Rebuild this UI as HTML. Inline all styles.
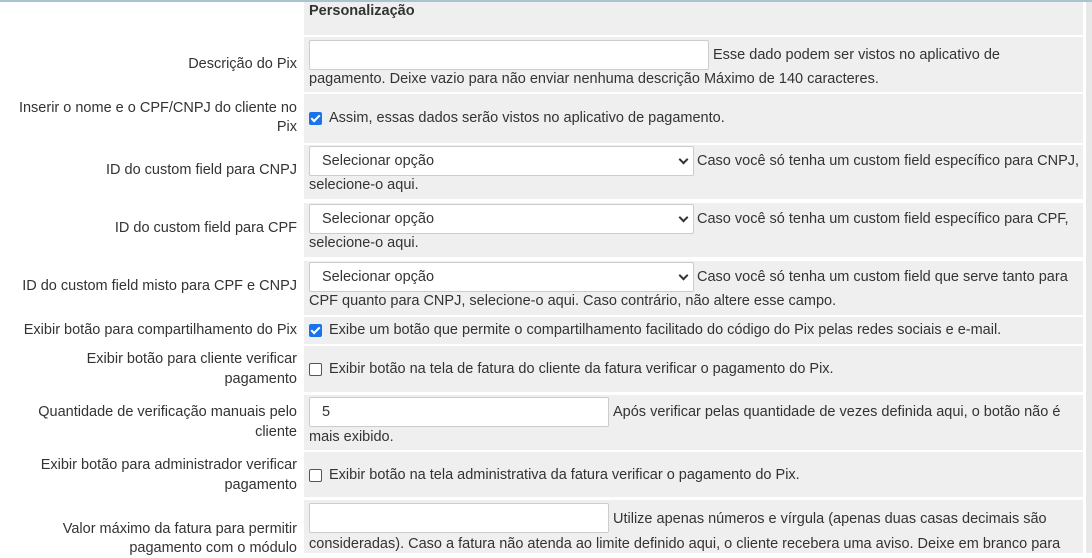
<!DOCTYPE html>
<html><head><meta charset="utf-8"><style>
body{margin:0;width:1092px;height:553px;overflow:hidden;background:#fff;font-family:"Liberation Sans",sans-serif;font-size:14.5px;color:#333;position:relative}
.top{position:absolute;left:0;top:0;width:1092px;height:2px;background:#a9c4cc}
.sb{position:absolute;left:1086px;top:2px;width:6px;height:551px;background:#e8e8e8}
.c{position:absolute;left:304px;width:779px;background:#efefef}
.l{position:absolute;right:795px;text-align:right;white-space:nowrap;line-height:19px}
.t{position:absolute;white-space:nowrap;line-height:19px}
.in{position:absolute;background:#fff;border:1px solid #ccc;border-radius:2px;box-sizing:border-box}
.sel{position:absolute;left:309px;width:385px;height:30px;background:#fff;border:1px solid #ccc;border-radius:2px;box-sizing:border-box;padding:6px 12px;line-height:16px}
.sel:after{content:"";position:absolute;right:6px;top:9px;width:5px;height:5px;border-right:2px solid #333;border-bottom:2px solid #333;transform:rotate(45deg)}
.cb{position:absolute;left:309px;width:13px;height:13px;border-radius:2px;box-sizing:border-box}
.on{background:#1a73e8}
.on:after{content:"";position:absolute;left:4px;top:1px;width:3px;height:7px;border-right:2px solid #fff;border-bottom:2px solid #fff;transform:rotate(45deg)}
.off{border:1px solid #555;background:#fff}
</style></head><body>
<div class="top"></div><div class="sb"></div>
<div class="c" style="top:2px;height:33px"></div>
<div class="t" style="left:309px;top:2px;font-weight:bold">Personalização</div>

<div class="c" style="top:37px;height:55px"></div>
<div class="l" style="top:55px">Descrição do Pix</div>
<div class="in" style="left:309px;top:40px;width:400px;height:30px"></div>
<div class="t" style="left:713px;top:46px">Esse dado podem ser vistos no aplicativo de</div>
<div class="t" style="left:309px;top:70px">pagamento. Deixe vazio para não enviar nenhuma descrição Máximo de 140 caracteres.</div>

<div class="c" style="top:94px;height:49px"></div>
<div class="l" style="top:99px">Inserir o nome e o CPF/CNPJ do cliente no</div>
<div class="l" style="top:118px">Pix</div>
<div class="cb on" style="top:112px"></div>
<div class="t" style="left:329px;top:109px">Assim, essas dados serão vistos no aplicativo de pagamento.</div>

<div class="c" style="top:145px;height:54px"></div>
<div class="l" style="top:161px">ID do custom field para CNPJ</div>
<div class="sel" style="top:146px">Selecionar opção</div>
<div class="t" style="left:697px;top:152px">Caso você só tenha um custom field específico para CNPJ,</div>
<div class="t" style="left:309px;top:176px">selecione-o aqui.</div>

<div class="c" style="top:203px;height:54px"></div>
<div class="l" style="top:219px">ID do custom field para CPF</div>
<div class="sel" style="top:204px">Selecionar opção</div>
<div class="t" style="left:697px;top:210px">Caso você só tenha um custom field específico para CPF,</div>
<div class="t" style="left:309px;top:234px">selecione-o aqui.</div>

<div class="c" style="top:261px;height:54px"></div>
<div class="l" style="top:277px">ID do custom field misto para CPF e CNPJ</div>
<div class="sel" style="top:262px">Selecionar opção</div>
<div class="t" style="left:697px;top:268px">Caso você só tenha um custom field que serve tanto para</div>
<div class="t" style="left:309px;top:292px">CPF quanto para CNPJ, selecione-o aqui. Caso contrário, não altere esse campo.</div>

<div class="c" style="top:317px;height:27px"></div>
<div class="l" style="top:321px">Exibir botão para compartilhamento do Pix</div>
<div class="cb on" style="top:324px"></div>
<div class="t" style="left:329px;top:321px">Exibe um botão que permite o compartilhamento facilitado do código do Pix pelas redes sociais e e-mail.</div>

<div class="c" style="top:346px;height:46px"></div>
<div class="l" style="top:350px">Exibir botão para cliente verificar</div>
<div class="l" style="top:370px">pagamento</div>
<div class="cb off" style="top:363px"></div>
<div class="t" style="left:329px;top:360px">Exibir botão na tela de fatura do cliente da fatura verificar o pagamento do Pix.</div>

<div class="c" style="top:395px;height:55px"></div>
<div class="l" style="top:403px">Quantidade de verificação manuais pelo</div>
<div class="l" style="top:423px">cliente</div>
<div class="in" style="left:309px;top:397px;width:300px;height:30px;padding:6px 12px;line-height:16px">5</div>
<div class="t" style="left:613px;top:403px">Após verificar pelas quantidade de vezes definida aqui, o botão não é</div>
<div class="t" style="left:309px;top:428px">mais exibido.</div>

<div class="c" style="top:452px;height:45px"></div>
<div class="l" style="top:456px">Exibir botão para administrador verificar</div>
<div class="l" style="top:476px">pagamento</div>
<div class="cb off" style="top:469px"></div>
<div class="t" style="left:329px;top:466px">Exibir botão na tela administrativa da fatura verificar o pagamento do Pix.</div>

<div class="c" style="top:500px;height:53px"></div>
<div class="l" style="top:520px">Valor máximo da fatura para permitir</div>
<div class="l" style="top:539px">pagamento com o módulo</div>
<div class="in" style="left:309px;top:503px;width:300px;height:30px"></div>
<div class="t" style="left:613px;top:510px">Utilize apenas números e vírgula (apenas duas casas decimais são</div>
<div class="t" style="left:309px;top:535px">consideradas). Caso a fatura não atenda ao limite definido aqui, o cliente recebera uma aviso. Deixe em branco para</div>
</body></html>
